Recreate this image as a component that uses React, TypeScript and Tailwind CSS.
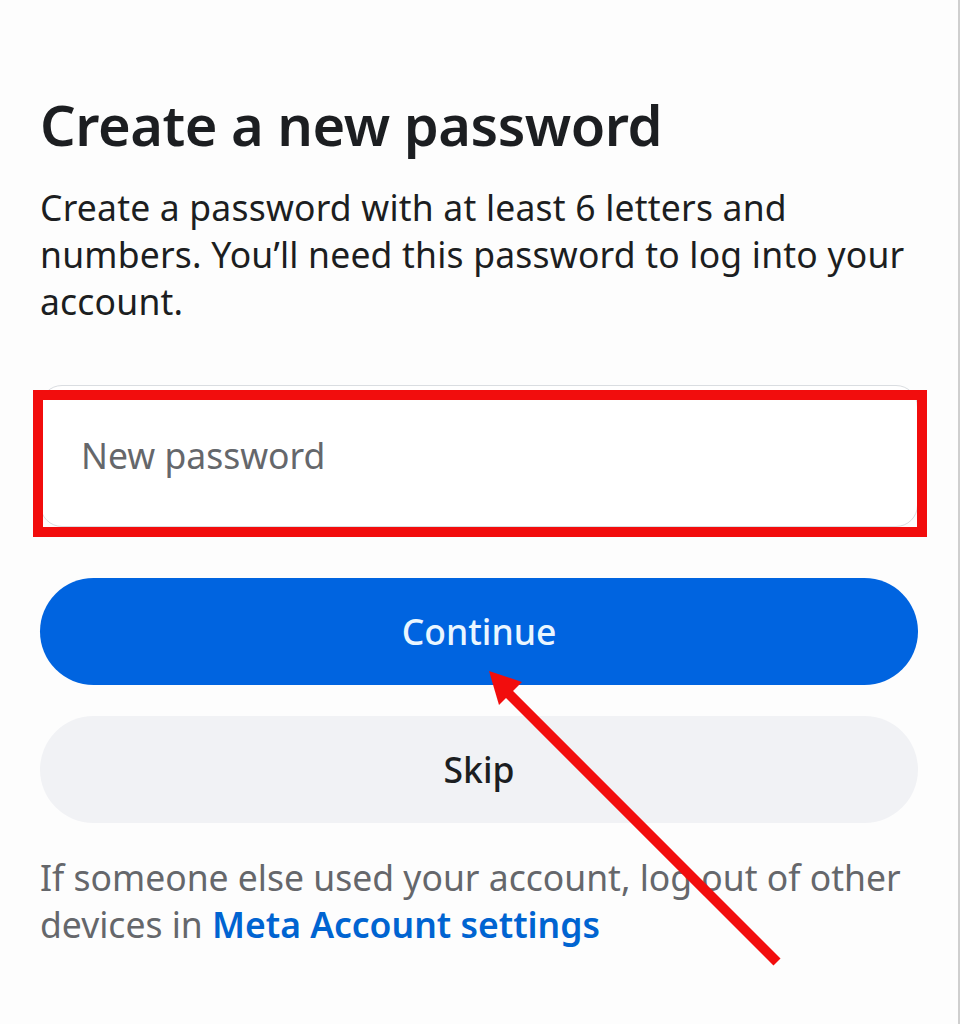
import React from 'react';

const font = { fontFamily: '"Noto Sans", "Open Sans", sans-serif' };

function Arrow() {
  return (
    <svg className="absolute inset-0 pointer-events-none" width="960" height="1024" viewBox="0 0 960 1024">
      <line x1="777" y1="962" x2="506" y2="691" stroke="#f20d0d" strokeWidth="10" strokeLinecap="butt" />
      <polygon points="489,671 522,682 499,705" fill="#f20d0d" />
    </svg>
  );
}

export default function App() {
  return (
    <div className="relative w-[960px] h-[1024px] bg-[#fdfdfd] border-r-2 border-[#cfcfcf] overflow-hidden" style={font}>
      <div className="px-10 pt-[88px]">
        <h1 className="text-[56px] leading-[72px] font-semibold text-[#1c1e21] tracking-[-0.5px]">
          Create a new password
        </h1>
        <p className="mt-[24px] text-[35.5px] leading-[47px] text-[#1c1e21] tracking-[0.2px]">
          Create a password with at least 6 letters and numbers. You’ll need this password to log into your account.
        </p>

        <div className="relative mt-[60px]">
          <div className="h-[142px] rounded-[22px] border border-[#dadde1] bg-white flex items-center px-10">
            <span className="text-[35.5px] text-[#65676b]">New password</span>
          </div>
          <div className="absolute top-[5px] left-[-7px] right-[-9px] bottom-[-10px] border-[10px] border-[#f20d0d]" />
        </div>

        <div className="mt-[51px] flex flex-col gap-[31px]">
          <button className="h-[107px] rounded-full bg-[#0064e0] text-[35.5px] font-medium text-[#eaf6ff]">
            Continue
          </button>
          <button className="h-[107px] rounded-full bg-[#f1f2f5] text-[35.5px] font-medium text-[#1c1e21]">
            Skip
          </button>
        </div>

        <p className="mt-[31px] text-[35.5px] leading-[47px] text-[#65676b]">
          If someone else used your account, log out of other devices in{' '}
          <span className="font-semibold text-[#0064d1]">Meta Account settings</span>
        </p>
      </div>
      <Arrow />
    </div>
  );
}
